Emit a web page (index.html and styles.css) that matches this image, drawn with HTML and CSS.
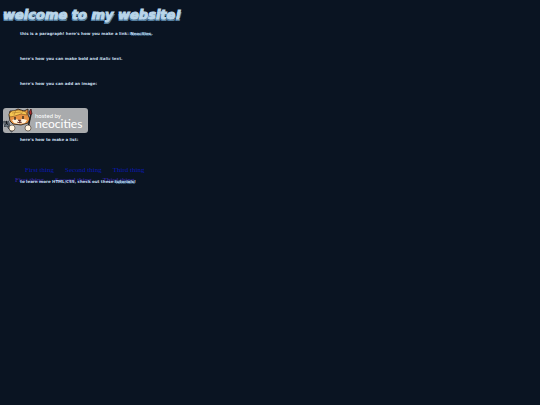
FILE: index.html
```html
<!DOCTYPE html>
<html lang="en">
<head>
<meta charset="utf-8">
<title>welcome to my website!</title>
<link rel="stylesheet" href="styles.css">
</head>
<body>
<h1>welcome to my website!</h1>
<main>
<p>this is a paragraph! here's how you make a link: <a href="#neocities" class="fancy">Neocities</a>.</p>
<p>here's how you can make <strong>bold</strong> and <em>italic</em> text.</p>
<p>here's how you can add an image:</p>
<a class="badge" href="#neocities" aria-label="hosted by neocities">
<svg viewBox="0 0 85 26" role="img" aria-hidden="true">
<rect x="0" y="0" width="85" height="25" rx="3" fill="#a9abad"/>
<text class="hosted" x="32" y="10">hosted by</text>
<text class="brand" x="32" y="20">neocities</text>
<path d="M6 7 7 3 11 3 15 1 21 3 25 1 25 7 27 11 25 15 18 17 10 16 7 13Z" fill="#e79343" stroke="#1b1714" stroke-width=".8"/>
<path d="M7 9 6 6 9 3 16 2 23 4 24 7 18 6 12 8Z" fill="#f5c552" stroke="#65411a" stroke-width=".5"/>
<path d="M9 5 18 4M13 2 11 7M20 3 18 6" fill="none" stroke="#9a6927" stroke-width=".5"/>
<path d="M9 12 12 11 16 12 20 11 24 12 22 15 16 16 11 15Z" fill="#fff2dc"/>
<path d="M12 9v3M20 8v3" stroke="#171719" stroke-width="1.2"/>
<path d="M15 12h3l-1 2zM14 14q3 2 5 0" fill="#7c2e23" stroke="#482019" stroke-width=".5"/>
<path d="M3 16 9 24M1 13l1 5 4-1-1-4M3 13l1 4" fill="none" stroke="#14191f" stroke-width="1.6"/>
<path d="M1 13l1 5 4-1-1-4M3 16 9 24" fill="none" stroke="#8998a3" stroke-width=".7"/>
<path d="M25 20 28 6" stroke="#1f1b1b" stroke-width="1.4"/>
<path d="M27 7 26 4 28 1 29 6Z" fill="#a92928" stroke="#351a1b" stroke-width=".8"/>
<circle cx="9" cy="20" r="3" fill="#fff3df" stroke="#30251d" stroke-width=".6"/>
<circle cx="25" cy="20" r="3" fill="#fff3df" stroke="#30251d" stroke-width=".6"/>
</svg>
</a>
<p>here's how to make a list:</p>
<ul class="things">
<li>First thing</li><li>Second thing</li><li>Third thing</li>
</ul>
<div class="closing">
<ul class="things visited">
<li>First thing</li><li>Second thing</li><li>Third thing</li>
</ul>
<p>to learn more HTML/CSS, check out these <a href="#tutorials" class="fancy">tutorials</a>!</p>
</div>
</main>
</body>
</html>
```
FILE: styles.css
```css
body {
  margin: 0;
  padding: 6px 3px;
  background: #0a1422;
  color: #c5dceb;
  font-family: "DejaVu Sans", sans-serif;
}
h1 {
  margin: 0;
  font-size: 13px;
  line-height: 17px;
  font-weight: bold;
  font-style: italic;
  color: #b9d5e9;
  -webkit-text-stroke: 1px #b9d5e9;
  text-shadow: 1px 2px #557f9f, -1px 2px #557f9f;
}
main {
  display: flex;
  flex-direction: column;
  align-items: flex-start;
  padding-top: 7px;
}
p {
  margin: 0 0 17px 17px;
  font-size: 4px;
  line-height: 8px;
  font-weight: bold;
}
.fancy {
  color: #b9d5e9;
  font-style: italic;
  text-decoration: none;
  text-shadow: 1px 1px #446d91, -1px 0 #446d91;
}
.badge {
  display: block;
  width: 85px;
  margin: 3px 0 2px;
}
.badge svg {
  display: block;
  width: 100%;
}
.badge text {
  fill: #fff;
  font-family: Lato, sans-serif;
}
.badge .hosted {
  font-size: 6px;
}
.badge .brand {
  font-size: 12px;
}
.things {
  display: flex;
  gap: 11px;
  margin: 4px 0 0 22px;
  padding: 0;
  list-style: none;
  color: #0a1ab4;
  font-family: "Liberation Serif", serif;
  font-size: 7px;
  line-height: 10px;
}
.closing {
  display: grid;
}
.closing > * {
  grid-area: 1 / 1;
}
.closing p {
  margin-bottom: 0;
  align-self: end;
}
.closing .visited {
  margin: 0 0 1px 12px;
  color: #3a28ae;
}
```
